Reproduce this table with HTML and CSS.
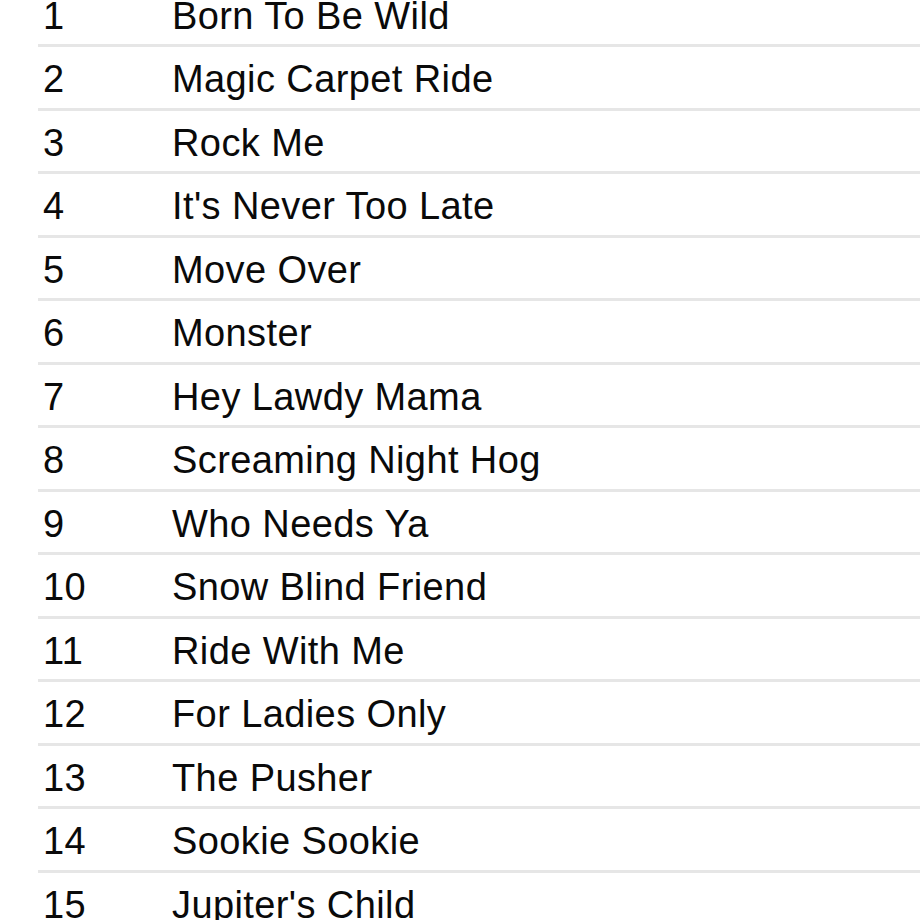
FILE: index.html
```html
<!DOCTYPE html>
<html lang="en">
<head>
    <meta charset="UTF-8">
    <meta name="viewport" content="width=device-width, initial-scale=1.0">
    <title>Tracks</title>
    <link rel="stylesheet" href="styles.css">
</head>
<body>
    <ol class="track-list">
        <li class="track"><span class="num">1</span><span class="title">Born To Be Wild</span></li>
        <li class="track"><span class="num">2</span><span class="title">Magic Carpet Ride</span></li>
        <li class="track"><span class="num">3</span><span class="title">Rock Me</span></li>
        <li class="track"><span class="num">4</span><span class="title">It's Never Too Late</span></li>
        <li class="track"><span class="num">5</span><span class="title">Move Over</span></li>
        <li class="track"><span class="num">6</span><span class="title">Monster</span></li>
        <li class="track"><span class="num">7</span><span class="title">Hey Lawdy Mama</span></li>
        <li class="track"><span class="num">8</span><span class="title">Screaming Night Hog</span></li>
        <li class="track"><span class="num">9</span><span class="title">Who Needs Ya</span></li>
        <li class="track"><span class="num">10</span><span class="title">Snow Blind Friend</span></li>
        <li class="track"><span class="num">11</span><span class="title">Ride With Me</span></li>
        <li class="track"><span class="num">12</span><span class="title">For Ladies Only</span></li>
        <li class="track"><span class="num">13</span><span class="title">The Pusher</span></li>
        <li class="track"><span class="num">14</span><span class="title">Sookie Sookie</span></li>
        <li class="track"><span class="num">15</span><span class="title">Jupiter's Child</span></li>
    </ol>
</body>
</html>
```

FILE: styles.css
```css
* {
    margin: 0;
    padding: 0;
    box-sizing: border-box;
}

html, body {
    background: #fff;
    overflow: hidden;
}

body {
    font-family: 'Liberation Sans', Arial, Helvetica, sans-serif;
    color: #0a0a0a;
}

.track-list {
    list-style: none;
    margin-left: 38px;
    margin-top: -16.5px;
}

.track {
    display: grid;
    grid-template-columns: 129px 1fr;
    height: 63.54px;
    padding: 5px 0 0 5px;
    border-bottom: 3px solid #e6e6e6;
    font-size: 38px;
    line-height: 55.5px;
    letter-spacing: 0.4px;
    white-space: nowrap;
}
```
